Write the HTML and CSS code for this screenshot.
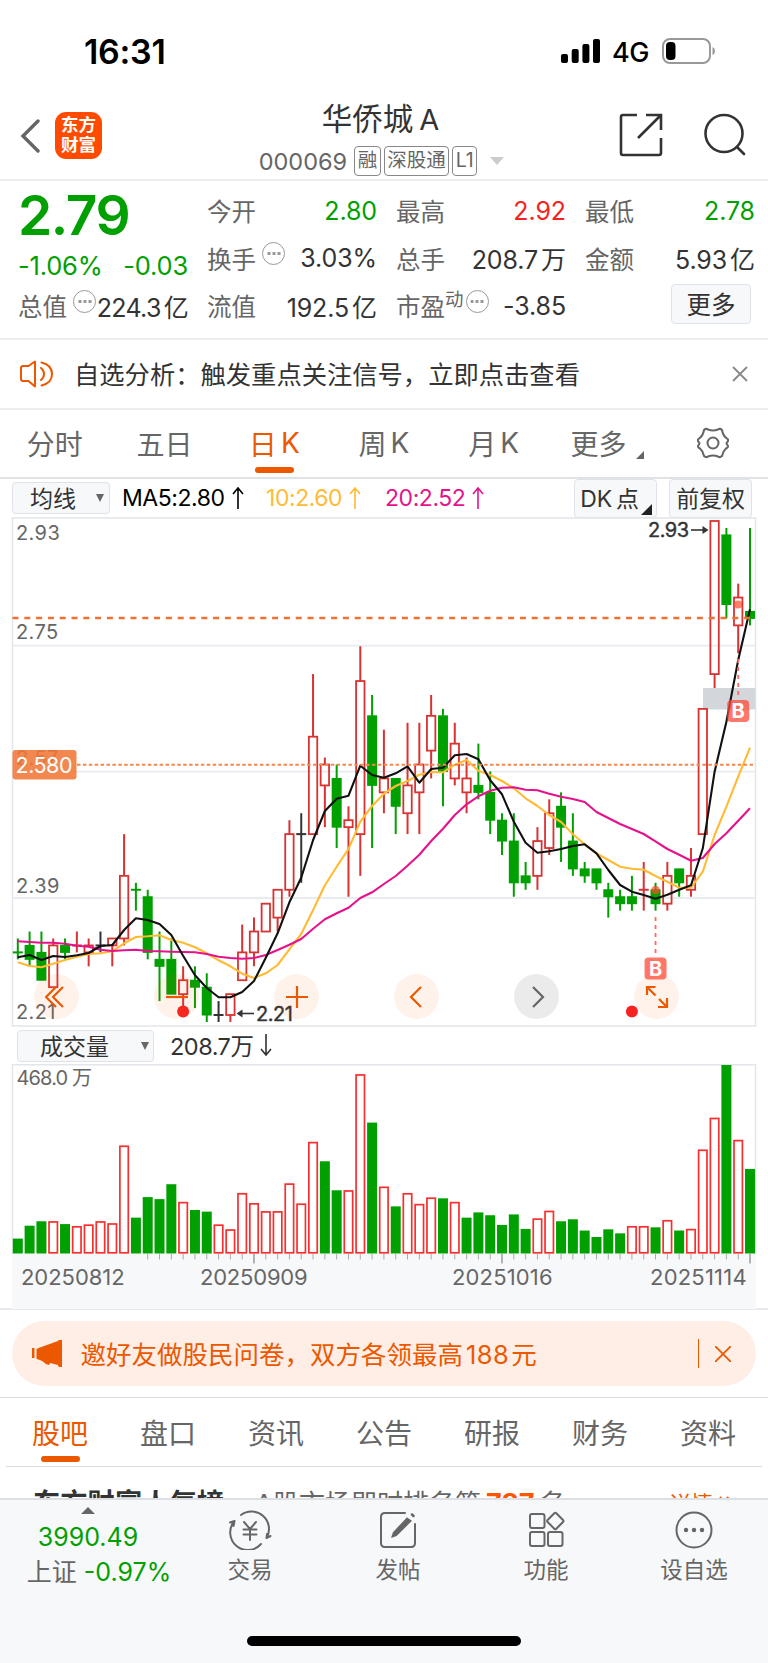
FILE: index.html
```html
<!DOCTYPE html>
<html lang="zh-CN">
<head>
    <meta charset="UTF-8">
    <meta name="viewport" content="width=device-width, initial-scale=1.0">
    <title>华侨城A 000069</title>
    <link rel="stylesheet" href="styles.css">
</head>
<body>
    <div class="status-bar">
        <span class="time">16:31</span>
        <div class="status-icons">
            <svg width="40" height="26" viewBox="0 0 40 26">
                <rect x="0" y="16" width="7" height="9" rx="2"/>
                <rect x="10.7" y="11" width="7" height="14" rx="2"/>
                <rect x="21.4" y="6" width="7" height="19" rx="2"/>
                <rect x="32" y="1" width="7" height="24" rx="2"/>
            </svg>
            <span class="network">4G</span>
            <svg width="54" height="26" viewBox="0 0 54 26">
                <rect x="1" y="1" width="47" height="24" rx="7" fill="none" stroke="#999" stroke-width="2"/>
                <rect x="4" y="4" width="9.5" height="18" rx="4"/>
                <path d="M50.5 9v8q2.5-1 2.500-4t-2.500-4z" fill="#999"/>
            </svg>
        </div>
    </div>

    <header class="header">
        <div class="header-left">
            <svg width="20" height="34" viewBox="0 0 20 34"><path d="M18 2L3 17l15 15" fill="none" stroke="#666" stroke-width="3.4" stroke-linecap="round"/></svg>
            <div class="logo">东方<br>财富</div>
        </div>
        <div class="header-title">
            <h1>华侨城<span>A</span></h1>
            <div class="stock-code">
                <span class="code">000069</span>
                <span class="tag">融</span>
                <span class="tag tag-wide">深股通</span>
                <span class="tag">L1</span>
                <i class="caret"></i>
            </div>
        </div>
        <div class="header-right">
            <svg width="44" height="44" viewBox="0 0 44 44" fill="none" stroke="#333" stroke-width="2.6">
                <path d="M18 2H4q-2 0-2 2v36q0 2 2 2h36q2 0 2-2V25M27 2h15v15M42 2L19 25"/>
            </svg>
            <svg width="44" height="44" viewBox="0 0 44 44" fill="none" stroke="#333" stroke-width="2.6" stroke-linecap="round">
                <circle cx="21" cy="20.500" r="18.500"/>
                <path d="M34 34l7 7"/>
            </svg>
        </div>
    </header>

    <section class="quote">
        <div class="quote-col">
            <div class="price">2.79</div>
            <div class="change"><span>-1.06%</span><span>-0.03</span></div>
            <div class="cell tight"><label>总值</label><i class="info"></i><b>224.3<em>亿</em></b></div>
        </div>
        <div class="quote-col">
            <div class="cell"><label>今开</label><b class="green">2.80</b></div>
            <div class="cell"><label>换手</label><i class="info"></i><b>3.03%</b></div>
            <div class="cell"><label>流值</label><b>192.5<em>亿</em></b></div>
        </div>
        <div class="quote-col">
            <div class="cell"><label>最高</label><b class="red">2.92</b></div>
            <div class="cell"><label>总手</label><b>208.7<em>万</em></b></div>
            <div class="cell"><label>市盈<sup>动</sup></label><i class="info"></i><b>-3.85</b></div>
        </div>
        <div class="quote-col">
            <div class="cell"><label>最低</label><b class="green">2.78</b></div>
            <div class="cell"><label>金额</label><b>5.93<em>亿</em></b></div>
            <div class="cell"><button class="more-btn">更多</button></div>
        </div>
    </section>

    <section class="notice">
        <svg width="34" height="28" viewBox="0 0 34 28" fill="none" stroke="#ec5800" stroke-width="2" stroke-linecap="round" stroke-linejoin="round">
            <path d="M15 1.500v25L8.500 21H3q-2 0-2-2V8q0-2 2-2h5.500z"/>
            <path d="M21 8q3 2.500 3 6t-3 6M21.500 2.500Q32 5 32 14t-10.500 11.500"/>
        </svg>
        <p>自选分析：触发重点关注信号，立即点击查看</p>
        <svg width="16" height="16" viewBox="0 0 16 16"><path d="M1 1l14 14M15 1L1 15" stroke="#888" stroke-width="1.800"/></svg>
    </section>

    <nav class="period-tabs">
        <span>分时</span>
        <span>五日</span>
        <span class="active">日<small>K</small></span>
        <span>周<small>K</small></span>
        <span>月<small>K</small></span>
        <span class="has-corner">更多<i class="corner"></i></span>
        <span>
            <svg width="32" height="32" viewBox="-16 -16 32 32" fill="none" stroke="#666" stroke-width="2" stroke-linejoin="round">
                <path d="M-9-13Q-7-15-5-13.500Q0-11.500 5-13.500Q7-15 9-13Q10-7 14-4.500Q16-3 14.500-1Q12.500 0 14.500 2Q16 4 13 5.500Q10 8 9 13Q7 15 5 13.500Q0 11.500-5 13.500Q-7 15-9 13Q-10 8-13 5.500Q-16 4-14.500 2Q-12.500 0-14.500-1Q-16-3-14-4.500Q-10-7-9-13z"/>
                <circle r="5.500"/>
            </svg>
        </span>
    </nav>

    <div class="ma-bar">
        <button class="select ma-select">均线<i></i></button>
        <span class="ma ma5">MA5:2.80<svg width="12" height="24" viewBox="0 0 12 24"><path d="M6 23V2M1 8l5-6 5 6"/></svg></span>
        <span class="ma ma10">10:2.60<svg width="12" height="24" viewBox="0 0 12 24"><path d="M6 23V2M1 8l5-6 5 6"/></svg></span>
        <span class="ma ma20">20:2.52<svg width="12" height="24" viewBox="0 0 12 24"><path d="M6 23V2M1 8l5-6 5 6"/></svg></span>
        <div class="ma-actions">
            <button class="dk">DK<em>点</em><i class="corner"></i></button>
            <button>前复权</button>
        </div>
    </div>

    <div class="chart">
        <svg id="kline" width="768" height="510" viewBox="0 517 768 510"></svg>
        <div class="chart-tools">
            <span><svg width="24" height="24" viewBox="0 0 24 24"><path d="M11 2L1 12l10 10M18 2L8 12l10 10"/></svg></span>
            <span><svg width="24" height="24" viewBox="0 0 24 24"><path d="M1 12h22"/></svg></span>
            <span><svg width="24" height="24" viewBox="0 0 24 24"><path d="M1 12h22M12 1v22"/></svg></span>
            <span><svg width="24" height="24" viewBox="0 0 24 24"><path d="M16 2L6 12l10 10"/></svg></span>
            <span class="disabled"><svg width="24" height="24" viewBox="0 0 24 24"><path d="M8 2l10 10L8 22"/></svg></span>
            <span><svg width="24" height="24" viewBox="0 0 24 24"><path d="M2 10V2h8.500M2 2l8.500 8.500M22 13v9h-9M22 22l-8-8"/></svg></span>
        </div>
    </div>

    <div class="vol-bar">
        <button class="select vol-select">成交量<i></i></button>
        <span>208.7万<svg width="12" height="24" viewBox="0 0 12 24"><path d="M6 1v21M1 16l5 6 5-6"/></svg></span>
    </div>
    <div class="volume">
        <svg id="volume" width="768" height="245" viewBox="0 1064 768 245"></svg>
    </div>

    <section class="promo">
        <div class="promo-pill">
            <svg width="30" height="27" viewBox="0 0 30 27" fill="#ec5800">
                <path d="M0 8h2.500v10H0zM4.500 9L8 7.500 26 1q0-1 1.500-1H30v27h-2.500q-1.500 0-1.500-2l-8-2-1 2q-3 0-6-3.500L8 20l-3.500-1z"/>
            </svg>
            <p>邀好友做股民问卷，双方各领最高<b>188</b>元</p>
            <i class="divider"></i>
            <svg width="16" height="16" viewBox="0 0 16 16"><path d="M0 0l16 16M16 0L0 16" stroke="#ec5800" stroke-width="1.800"/></svg>
        </div>
    </section>

    <nav class="info-tabs">
        <span class="active">股吧</span>
        <span>盘口</span>
        <span>资讯</span>
        <span>公告</span>
        <span>研报</span>
        <span>财务</span>
        <span>资料</span>
    </nav>

    <div class="rank-row">
        <strong>东方财富人气榜</strong>
        <span class="rank-text">A股市场即时排名第<b>787</b>名</span>
        <a>详情
            <svg width="15" height="16" viewBox="0 0 15 16"><path d="M1 1l6 7-6 7M8 1l6 7-6 7" fill="none" stroke="#ec5800" stroke-width="2"/></svg>
        </a>
    </div>

    <footer class="bottom-bar">
        <div class="bottom-items">
            <div class="index-item">
                <i class="up"></i>
                <span class="green">3990.49</span>
                <span>上证 <b class="green">-0.97%</b></span>
            </div>
            <div class="bottom-item">
                <svg width="44" height="40" viewBox="0 0 44 40" fill="none" stroke="#666" stroke-width="2" stroke-linecap="round">
                    <path d="M13 5A17.500 17.500 0 0 1 38.500 28M38.500 28l4-2M38.500 28l.500-4M33 34A17.500 17.500 0 0 1 6.500 11M6.500 11L2 12.500M6.500 11L5.500 16"/>
                    <path d="M16 12l6 7 6-7M22 19v11M15.500 19.500h13M15.500 24.500h13"/>
                </svg>
                交易
            </div>
            <div class="bottom-item">
                <svg width="44" height="40" viewBox="0 0 44 40" fill="none" stroke="#666" stroke-width="2" stroke-linecap="round">
                    <path d="M29 3H9Q5 3 5 7v26q0 4 4 4h26q4 0 4-4V14"/>
                    <path d="M31 9L18 23l-1 3 3-1L34 11zM36 4.500l1.500 1.500" stroke-width="2.500" fill="#666"/>
                </svg>
                发帖
            </div>
            <div class="bottom-item">
                <svg width="44" height="40" viewBox="0 0 44 40" fill="none" stroke="#666" stroke-width="2" stroke-linejoin="round">
                    <rect x="6" y="4" width="14.500" height="14" rx="2"/>
                    <rect x="6" y="22" width="14.500" height="14" rx="2"/>
                    <rect x="24" y="22" width="14.500" height="14" rx="2"/>
                    <path d="M30.300 3.200q1-1 2 0l6.700 6.800q1 1 0 2l-6.700 6.700q-1 1-2 0l-6.700-6.700q-1-1 0-2z"/>
                </svg>
                功能
            </div>
            <div class="bottom-item">
                <svg width="44" height="40" viewBox="0 0 44 40" fill="#666">
                    <circle cx="22" cy="20" r="17.500" fill="none" stroke="#666" stroke-width="2"/>
                    <circle cx="14" cy="20" r="2.200"/><circle cx="22" cy="20" r="2.200"/><circle cx="30" cy="20" r="2.200"/>
                </svg>
                设自选
            </div>
        </div>
        <div class="home-indicator"></div>
    </footer>

    <script src="script.js"></script>
</body>
</html>
```

FILE: styles.css
```css
* {
    margin: 0;
    padding: 0;
    box-sizing: border-box;
}

body {
    width: 768px;
    height: 1663px;
    overflow: hidden;
    background-color: #fff;
    color: #333;
    font-family: Inter, "Noto Sans CJK SC", sans-serif;
}

svg {
    display: block;
    flex-shrink: 0;
}

em, i {
    font-style: normal;
}

button {
    font-family: inherit;
    color: #333;
    background-color: #f7f8fa;
    border: 1.5px solid #dfe2e8;
    border-radius: 4px;
    white-space: nowrap;
}

.green {
    color: #00a000 !important;
}

.red {
    color: #f72323 !important;
}

/* status bar */
.status-bar {
    height: 95px;
    padding: 7px 52px 0 84px;
    display: flex;
    justify-content: space-between;
    align-items: center;
    color: #000;
}

.time {
    font-size: 34px;
    font-weight: 600;
    letter-spacing: -0.3px;
}

.status-icons {
    display: flex;
    align-items: center;
}

.network {
    width: 61px;
    padding: 2px 0 0 11px;
    font-size: 27px;
    font-weight: 500;
    letter-spacing: -0.4px;
}

/* header */
.header {
    height: 86px;
    display: flex;
    justify-content: space-between;
    border-bottom: 2px solid #ededed;
}

.header-left {
    width: 200px;
    padding: 0 0 3px 20px;
    display: flex;
    align-items: center;
    gap: 15px;
}

.logo {
    width: 47px;
    height: 47px;
    padding-top: 3px;
    border-radius: 11px;
    background-color: #ff4a00;
    color: #fff;
    font-size: 17.500px;
    font-weight: 700;
    line-height: 20px;
    text-align: center;
}

.header-title {
    width: 280px;
}

.header-title h1 {
    height: 50px;
    padding-right: 7px;
    line-height: 48px;
    font-size: 30.500px;
    font-weight: 400;
    text-align: center;
}

.header-title h1 span {
    margin-left: 6px;
    font-size: 29px;
}

.stock-code {
    display: flex;
    align-items: center;
    justify-content: center;
    gap: 3px;
    height: 32px;
    padding-right: 5px;
    color: #666;
}

.code {
    margin-right: 4px;
    font-size: 23.500px;
}

.tag {
    height: 30px;
    padding: 0 2.5px;
    border: 1.5px solid #888;
    border-radius: 4px;
    font-size: 19.5px;
    line-height: 27px;
}

.stock-code .caret {
    margin-left: 10px;
    border-left: 7px solid transparent;
    border-right: 7px solid transparent;
    border-top: 8px solid #ccc;
}

.header-right {
    width: 200px;
    padding: 0 21px 4px 0;
    display: flex;
    align-items: center;
    justify-content: flex-end;
    gap: 40px;
}

/* quote */
.quote {
    height: 159px;
    padding: 6px 13px 0 18px;
    display: grid;
    grid-template-columns: 170px 170px 170px 170px;
    column-gap: 19px;
    border-bottom: 2px solid #ededed;
}

.cell {
    height: 47.500px;
    display: flex;
    align-items: center;
    font-size: 24.500px;
    color: #666;
}

.cell label {
    white-space: nowrap;
}

.cell sup {
    font-size: 18.500px;
    vertical-align: 10px;
    line-height: 0;
}

.cell b {
    margin-left: auto;
    font-size: 25px;
    font-weight: 400;
    letter-spacing: -0.1px;
    color: #333;
    white-space: nowrap;
}

.tight b {
    letter-spacing: -0.7px;
}

.cell em {
    margin-left: 3px;
}

.info {
    width: 23px;
    height: 23px;
    margin: -9px 0 0 6px;
    border: 1.5px solid #999;
    border-radius: 50%;
    background: radial-gradient(circle, #999 1.500px, transparent 2px) center / 5px 5px repeat-x;
    background-clip: content-box;
    padding: 7px 2.500px;
    flex-shrink: 0;
}

.quote-col:nth-child(3) .info {
    margin-left: 2px;
}

.price {
    height: 57px;
    line-height: 57px;
    font-size: 55px;
    font-weight: 600;
    letter-spacing: -1.4px;
    color: #00a000;
}

.change {
    height: 38px;
    display: flex;
    align-items: center;
    justify-content: space-between;
    padding-top: 5px;
    font-size: 25.500px;
    letter-spacing: -0.2px;
    color: #00a000;
}

.more-btn {
    width: 80px;
    height: 40px;
    margin: -3px 4px 0 auto;
    padding-bottom: 2px;
    font-size: 24.500px;
}

/* notice */
.notice {
    height: 70px;
    padding: 0 20px;
    display: flex;
    align-items: center;
    border-bottom: 2px solid #ededed;
}

.notice p {
    flex: 1;
    margin-left: 20px;
    padding-bottom: 3px;
    font-size: 25.300px;
}

/* period tabs */
.period-tabs {
    height: 69px;
    display: grid;
    grid-template-columns: repeat(7, 1fr);
    border-bottom: 2px solid #e0e2e6;
}

.period-tabs span,
.info-tabs span {
    position: relative;
    padding-bottom: 2px;
    display: flex;
    align-items: center;
    justify-content: center;
    font-size: 28px;
    color: #666;
}

.info-tabs span {
    padding-bottom: 0;
}

.period-tabs small {
    margin-left: 4px;
    font-size: 28px;
}

.period-tabs .active,
.info-tabs .active {
    color: #ec5800;
}

.active::after {
    content: "";
    position: absolute;
    bottom: 4px;
    left: calc(50% - 19.5px);
    width: 39px;
    height: 6px;
    border-radius: 3px;
    background-color: #ec5800;
}

.corner {
    border-left: 8px solid transparent;
    border-bottom: 8px solid #666;
}

.period-tabs .has-corner {
    padding-left: 8px;
}

.has-corner .corner {
    margin: 24px 0 0 10px;
}

/* moving average bar */
.ma-bar {
    height: 38px;
    padding: 0 16px 0 12px;
    display: flex;
    align-items: center;
    font-size: 23px;
}

.select {
    height: 32px;
    padding-bottom: 2px;
    display: flex;
    align-items: center;
    justify-content: space-between;
    font-size: 23px;
}

.select i {
    margin-top: 2px;
    border-left: 4.500px solid transparent;
    border-right: 4.500px solid transparent;
    border-top: 8px solid #666;
}

.ma-select {
    width: 98px;
    padding: 0 5px 2px 17px;
}

.ma {
    display: flex;
    align-items: center;
    gap: 7px;
    letter-spacing: -0.45px;
}

.ma svg path,
.vol-bar span svg path {
    fill: none;
    stroke: currentColor;
    stroke-width: 1.6;
}

.ma5 {
    width: 144px;
    margin-left: 12px;
    color: #000;
}

.ma10 {
    width: 119px;
    color: #ffbb33;
}

.ma20 {
    color: #e6128c;
}

.ma-actions {
    margin-left: auto;
    display: flex;
    gap: 12px;
}

.ma-actions button {
    position: relative;
    width: 83px;
    height: 39px;
    padding-bottom: 2px;
    font-size: 23px;
    letter-spacing: -0.2px;
}

.ma-actions .dk {
    padding-right: 12px;
}

.dk em {
    margin-left: 4px;
}

.dk .corner {
    position: absolute;
    right: 4px;
    bottom: 2px;
    border-left-width: 11px;
    border-bottom: 11px solid #222;
}

/* charts */
.chart {
    position: relative;
    height: 511px;
}

.chart-tools {
    position: absolute;
    left: 34px;
    top: 457px;
    display: flex;
    gap: 75px;
}

.chart-tools span {
    width: 45px;
    height: 45px;
    border-radius: 50%;
    display: flex;
    align-items: center;
    justify-content: center;
    background-color: rgba(236, 88, 0, 0.08);
}

.chart-tools path {
    fill: none;
    stroke: #ec5800;
    stroke-width: 2.2;
}

.chart-tools .disabled {
    background-color: rgba(0, 0, 0, 0.08);
}

.chart-tools .disabled path {
    stroke: #666;
}

.vol-bar {
    height: 36px;
    padding-left: 17px;
    display: flex;
    align-items: center;
    gap: 16px;
    font-size: 23.500px;
}

.vol-select {
    width: 137px;
    padding: 0 4px 2px 22px;
}

.vol-bar span {
    padding-bottom: 2px;
    display: flex;
    align-items: center;
    gap: 7px;
    letter-spacing: -0.5px;
}

.volume {
    height: 246px;
    border-bottom: 2px solid #e8e9ee;
}

.axis {
    font-size: 20px;
    fill: #666;
    letter-spacing: 0.4px;
}

.mark {
    font-size: 20px;
    fill: #333;
    stroke: #333;
    stroke-width: 0.4;
}

/* promo */
.promo {
    height: 88px;
    padding: 11px 12px 0;
    border-bottom: 1px solid #ddd;
}

.promo-pill {
    height: 65px;
    padding: 0 25px 0 20px;
    border-radius: 33px;
    background-color: #feeee6;
    color: #ec5800;
    display: flex;
    align-items: center;
}

.promo p {
    flex: 1;
    margin-left: 18.500px;
    padding-bottom: 2px;
    font-size: 25.500px;
}

.promo b {
    margin: 0 2px 0 3px;
    font-weight: 400;
    letter-spacing: 0.4px;
}

.divider {
    width: 1.500px;
    height: 29px;
    margin-right: 16px;
    background-color: #ec5800;
}

/* info tabs */
.info-tabs {
    height: 69px;
    margin: 0 6px;
    display: grid;
    grid-template-columns: repeat(7, 1fr);
    border-bottom: 1.500px solid #ddd;
}

.rank-row {
    height: 31px;
    padding: 19px 34px 0 33px;
    overflow: hidden;
    display: flex;
    align-items: flex-start;
    font-size: 26px;
    line-height: 36px;
    color: #666;
    white-space: nowrap;
}

.rank-row strong {
    width: 222px;
    font-size: 27.300px;
    color: #333;
}

.rank-text b {
    margin: 0 5px;
    font-size: 27px;
    color: #ff5500;
}

.rank-row a {
    margin-left: auto;
    display: flex;
    align-items: center;
    gap: 6px;
    font-size: 22px;
    color: #ec5800;
}

/* bottom bar */
.bottom-bar {
    height: 165px;
    border-top: 2px solid #dddfe4;
    background-color: #f7f8fa;
}

.bottom-items {
    height: 136px;
    display: grid;
    grid-template-columns: 176px repeat(4, 148px);
}

.bottom-item {
    padding-top: 10px;
    display: flex;
    flex-direction: column;
    align-items: center;
    gap: 2px;
    font-size: 22.500px;
    color: #666;
}

.index-item {
    padding-top: 7px;
    display: flex;
    flex-direction: column;
    align-items: center;
    font-size: 25px;
    line-height: 35px;
    color: #666;
}

.index-item .green {
    letter-spacing: 0;
}

.index-item span {
    white-space: nowrap;
}

.index-item span + span {
    padding-left: 22px;
}

.index-item b {
    font-weight: 400;
}

.index-item .up {
    margin-bottom: 6px;
    border-left: 7px solid transparent;
    border-right: 7px solid transparent;
    border-bottom: 7px solid #666;
}

.home-indicator {
    width: 274px;
    height: 10px;
    margin: 0 auto;
    border-radius: 5px;
    background-color: #000;
}
```

FILE: script.js
```js
// type, body top, body bottom, high, low (prices in cents), volume
// g = down, r = up, k = unchanged
const candles = [
    ['g', 231, 231, 233, 230, 37], ['g', 232, 230, 234, 229, 69], ['g', 231, 227, 234, 227, 80],
    ['r', 232, 226, 233, 226, 80], ['g', 232, 231, 233, 230, 73], ['r', 232, 232, 234, 231, 68],
    ['r', 232, 231, 233, 229, 72], ['k', 232, 232, 234, 231, 80], ['r', 233, 232, 233, 229, 75],
    ['r', 242, 233, 248, 232, 268], ['g', 240, 240, 241, 237, 89], ['g', 239, 231, 240, 230, 140],
    ['g', 230, 229, 234, 224, 135], ['g', 230, 225, 233, 225, 172], ['r', 227, 225, 229, 223, 128],
    ['g', 227, 226, 229, 223, 108], ['g', 226, 222, 228, 221, 104], ['k', 222, 222, 224, 221, 72],
    ['r', 225, 222, 225, 221, 60], ['r', 231, 227, 235, 227, 150], ['r', 234, 231, 236, 229, 125],
    ['r', 238, 234, 238, 234, 105], ['r', 240, 236, 240, 234, 105], ['r', 248, 240, 250, 239, 174],
    ['k', 248, 248, 251, 241, 124], ['r', 262, 248, 271, 248, 277], ['r', 258, 255, 259, 249, 229],
    ['g', 256, 249, 258, 246, 157], ['r', 250, 249, 252, 239, 157], ['r', 270, 248, 275, 242, 445],
    ['g', 265, 255, 268, 246, 325], ['r', 256, 254, 263, 251, 166], ['g', 256, 252, 256, 248, 117],
    ['r', 255, 251, 264, 248, 150], ['r', 258, 254, 264, 248, 123], ['r', 265, 260, 268, 256, 139],
    ['g', 265, 257, 266, 252, 137], ['r', 261, 256, 264, 255, 128], ['r', 256, 254, 259, 251, 89],
    ['g', 255, 254, 261, 253, 102], ['g', 254, 250, 257, 248, 95], ['g', 250, 247, 251, 245, 71],
    ['g', 247, 241, 251, 239, 97], ['g', 242, 241, 244, 240, 61], ['r', 247, 242, 249, 240, 87],
    ['r', 251, 246, 253, 245, 106], ['g', 252, 249, 254, 244, 80], ['g', 247, 243, 251, 242, 85],
    ['g', 243, 242, 244, 241, 57], ['g', 243, 241, 243, 240, 41], ['g', 240, 239, 241, 236, 60],
    ['g', 239, 238, 240, 237, 50], ['g', 239, 238, 242, 237, 68], ['r', 240, 240, 244, 237, 68],
    ['g', 240, 238, 241, 237, 65], ['r', 242, 238, 244, 237, 83], ['g', 243, 241, 243, 239, 57],
    ['r', 242, 240, 246, 239, 61], ['r', 266, 248, 266, 248, 258], ['r', 293, 271, 293, 269, 337],
    ['g', 291, 281, 292, 279, 468], ['r', 282, 278, 284, 274, 282], ['g', 280, 279, 292, 278, 210]
];
// bars whose volume colour differs from the candle
const volumeType = { 26: 'g', 38: 'g', 52: 'r' };

// moving averages, y in device pixels from the top of the pane (3 per css pixel)
const averages = {
    '#ffbb33': [1357,1368,1372,1361,1350,1340,1332,1330,1324,1300,1281,1279,1276,1290,1298,1312,1330,1351,1369,1391,1404,1390,1365,1318,1272,1200,1126,1070,1017,935,888,851,828,813,794,786,787,764,750,782,795,813,835,865,888,915,936,973,1003,1030,1050,1070,1076,1079,1098,1115,1133,1133,1085,975,890,800,713],
    '#e6128c': [1294,1296,1298,1298,1301,1307,1310,1319,1323,1321,1319,1323,1324,1325,1326,1327,1332,1340,1344,1346,1344,1335,1320,1304,1287,1256,1228,1210,1193,1164,1147,1122,1098,1067,1034,993,956,915,883,859,842,833,832,839,841,851,860,867,876,906,924,942,957,972,994,1017,1034,1052,1044,1002,970,932,895],
    '#111': [1342,1335,1350,1338,1341,1336,1329,1308,1305,1260,1225,1230,1242,1275,1337,1396,1434,1462,1462,1446,1413,1343,1270,1177,1103,990,903,866,857,767,795,803,790,769,818,777,773,736,732,748,811,853,935,998,1028,1024,1017,1008,1003,1030,1080,1125,1145,1155,1166,1154,1139,1126,1015,785,635,450,298]
};

const GREEN = '#00a000';
const colors = { g: GREEN, r: '#d93232', k: '#333' };
const x = i => 17.8 + i * 11.81;
const y = price => 521 + (293 - price) * 6.958;

const line = (x1, y1, x2, y2, color, width, extra = '') =>
    `<line x1="${x1}" y1="${y1}" x2="${x2}" y2="${y2}" stroke="${color}" stroke-width="${width}" ${extra}/>`;
const text = (tx, ty, cls, str, extra = '') => `<text x="${tx}" y="${ty}" class="${cls}" ${extra}>${str}</text>`;

function drawCandle(c, i) {
    const [type, top, bottom, high, low] = c;
    const cx = x(i);
    const color = colors[type];
    let out = '';
    if (top === bottom) {
        out += line(cx, y(high), cx, y(low), color, 2);
        out += line(cx - 5, y(top), cx + 5, y(top), color, 2);
    } else if (type === 'g') {
        out += line(cx, y(high), cx, y(low), color, 2);
        out += `<rect x="${cx - 5}" y="${y(top) - 0.5}" width="10" height="${y(bottom) - y(top) + 1}" fill="${color}"/>`;
    } else {
        if (high > top) out += line(cx, y(high), cx, y(top), color, 2);
        if (low < bottom) out += line(cx, y(bottom), cx, y(low), color, 2);
        out += `<rect x="${cx - 4.2}" y="${y(top)}" width="8.4" height="${y(bottom) - y(top)}" fill="none" stroke="${color}" stroke-width="1.8"/>`;
    }
    return out;
}

function buyBadge(cx, top) {
    return `<rect x="${cx - 11}" y="${top}" width="22" height="22" rx="4" fill="#ff4a3a" fill-opacity="0.75"/>` +
        `<text x="${cx}" y="${top + 18}" text-anchor="middle" font-size="20" font-weight="700" fill="#fff">B</text>`;
}

function drawKline() {
    let out = '<rect x="12.500" y="518" width="743" height="508" fill="none" stroke="#e3e5ea" stroke-width="1.500"/>';
    [645.7, 771.7, 898].forEach(gy => out += line(12.5, gy, 755.5, gy, '#e8ecf0', 1.8));
    out += text(16, 539.5, 'axis', '2.93') + text(16, 639, 'axis', '2.75') +
        text(16, 765, 'axis', '2.57') + text(16, 892.5, 'axis', '2.39') + text(16, 1019, 'axis', '2.21');

    out += '<rect x="703" y="688" width="52.500" height="21.500" fill="#d3d7dc"/>';
    out += candles.map(drawCandle).join('');

    for (const color in averages) {
        const points = averages[color].map((v, i) => `${x(i).toFixed(1)},${(510 + v / 3).toFixed(1)}`).join(' ');
        out += `<polyline points="${points}" fill="none" stroke="${color}" stroke-width="2.100" stroke-linejoin="round"/>`;
    }

    // last price and cost lines
    out += line(12.5, 618, 755.5, 618, '#f07030', 2.3, 'stroke-dasharray="6 5.8"');
    out += line(77, 764.7, 755.5, 764.7, '#f2884f', 2, 'stroke-dasharray="3.5 2.4"');
    out += '<rect x="12.500" y="750" width="64" height="29.500" rx="3" fill="#f07838" fill-opacity="0.88"/>';
    out += text(15.5, 773, '', '2.580', 'font-size="21.500" fill="#fff" textLength="57"');

    // high and low marks
    out += text(648, 537, 'mark', '2.93', 'textLength="41"');
    out += line(691, 530, 704, 530, '#333', 1.6) + '<path d="M708.500 530l-6-4v8z" fill="#333"/>';
    out += text(256, 1021, 'mark', '2.21', 'textLength="37"');
    out += line(242, 1013.5, 254, 1013.5, '#333', 1.6) + '<path d="M236.500 1013.500l6-4v8z" fill="#333"/>';

    // signals
    const sx = x(54), ex = x(61);
    out += line(sx, 917, sx, 953, '#ff6a5a', 1.8, 'stroke-dasharray="4 4"');
    out += line(ex, 659, ex, 695, '#ff6a5a', 1.8, 'stroke-dasharray="4 4"');
    out += buyBadge(sx, 957.5) + buyBadge(ex, 700);
    out += `<circle cx="${sx}" cy="890" r="4.300" fill="#ff4a2a" fill-opacity="0.7"/>`;
    out += `<circle cx="${ex}" cy="604.500" r="4" fill="#ff4a2a" fill-opacity="0.7"/>`;
    out += `<circle cx="${x(14)}" cy="1011.500" r="6" fill="#f72323"/><circle cx="${x(52)}" cy="1011.500" r="6" fill="#f72323"/>`;
    document.getElementById('kline').innerHTML = out;
}

function drawVolume() {
    const base = 1253.5;
    let out = '<rect x="12" y="1254" width="744" height="55" fill="#f7f8fa"/>';
    out += '<path d="M12.500 1254V1064.700H755.500V1254" fill="none" stroke="#e3e5ea" stroke-width="1.500"/>';
    candles.forEach((c, i) => {
        const h = c[5] * 188.5 / 468;
        const cx = x(i);
        if ((volumeType[i] || c[0]) === 'g') {
            out += `<rect x="${cx - 5}" y="${base - h}" width="10" height="${h}" fill="${GREEN}"/>`;
        } else {
            out += `<rect x="${cx - 4.2}" y="${base - h + 0.7}" width="8.400" height="${h - 1.4}" fill="#fff" stroke="#f72f2f" stroke-width="1.700"/>`;
        }
        if (i > 10) {
            const major = i === 20 || i === 41 || i === 62;
            out += line(cx, 1254, cx, major ? 1263.5 : 1259.5, '#aaa', major ? 1.8 : 1);
        }
    });
    out += text(16.5, 1084.5, 'axis', '468.0 万', 'textLength="76"');
    [[21, '20250812', 104], [200, '20250909', 108], [452, '20251016', 101], [650, '20251114', 97]].forEach(d => {
        out += text(d[0], 1285, 'axis', d[1], `textLength="${d[2]}" style="font-size:22px"`);
    });
    document.getElementById('volume').innerHTML = out;
}

drawKline();
drawVolume();
```
